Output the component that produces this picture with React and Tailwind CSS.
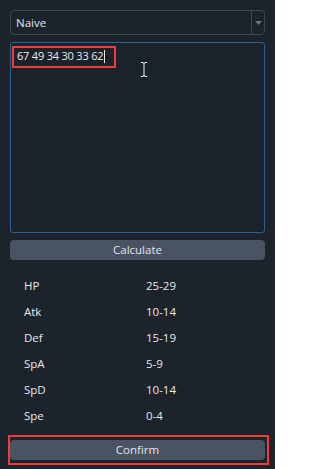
import React from "react";

const stats = [
  ["HP", "25-29"],
  ["Atk", "10-14"],
  ["Def", "15-19"],
  ["SpA", "5-9"],
  ["SpD", "10-14"],
  ["Spe", "0-4"],
];

export default function App() {
  return (
    <div
      className="w-[275px] h-[469px] bg-[#1c232b] text-[#dfe3e8] text-[11px] px-[10px] pt-[10px] flex flex-col relative overflow-hidden"
      style={{ fontFamily: '"Open Sans", "Noto Sans", sans-serif' }}
    >
      {/* dropdown */}
      <div className="h-[25px] flex border border-[#3e4650] rounded-[4px]">
        <div className="flex-1 flex items-center pl-[5px] text-[11.5px] text-[#e3e6ea]">Naive</div>
        <div className="w-[13px] border-l border-[#3e4650] flex items-center justify-center">
          <svg width="7" height="4" viewBox="0 0 7 4">
            <path d="M0 0 L7 0 L3.5 4 Z" fill="#6b737c" />
          </svg>
        </div>
      </div>

      {/* textarea */}
      <div className="mt-[7px] h-[191px] border border-[#2e5f92] rounded-[3px] bg-[#1b222a] relative">
        <div className="absolute left-[1px] top-[3px] w-[104px] h-[22px] border-2 border-[#ef3b3b]"></div>
        <div className="pl-[6px] pt-[6px] flex items-center leading-[14px] text-[#e8ebee] tracking-[-0.2px]">
          <span>67 49 34 30 33 62</span>
          <span className="inline-block w-px h-[13px] bg-[#e8ebee] ml-[1px]"></span>
        </div>
        <svg className="absolute left-[129px] top-[19px]" width="8" height="15" viewBox="0 0 8 15">
          <path d="M1 0.5 H3 M5 0.5 H7 M3 0.5 Q4 1 4 2 V13 Q4 14 3 14.5 M5 0.5 Q4 1 4 2 M4 13 Q4 14 5 14.5 M1 14.5 H3 M5 14.5 H7" stroke="#f2f2f2" strokeWidth="1" fill="none" />
        </svg>
      </div>

      {/* calculate */}
      <div className="mt-[7px] h-[20px] rounded-[4px] bg-[#4a5361] flex items-center justify-center text-[11.5px] text-[#e3e6ea]">
        Calculate
      </div>

      {/* stats */}
      <div className="mt-[13px] flex flex-col">
        {stats.map(([k, v]) => (
          <div key={k} className="h-[26px] flex items-center text-[11.5px] text-[#e6e9ec]">
            <span className="w-[136px] pl-[14px]">{k}</span>
            <span>{v}</span>
          </div>
        ))}
      </div>

      {/* confirm */}
      <div className="mt-[11px] relative">
        <div className="h-[20px] rounded-[4px] bg-[#4a5361] flex items-center justify-center text-[11.5px] text-[#e3e6ea]">
          Confirm
        </div>
        <div className="absolute -left-[2px] -right-[4px] -top-[5px] -bottom-[5px] border-2 border-[#ef3b3b]"></div>
      </div>
    </div>
  );
}
